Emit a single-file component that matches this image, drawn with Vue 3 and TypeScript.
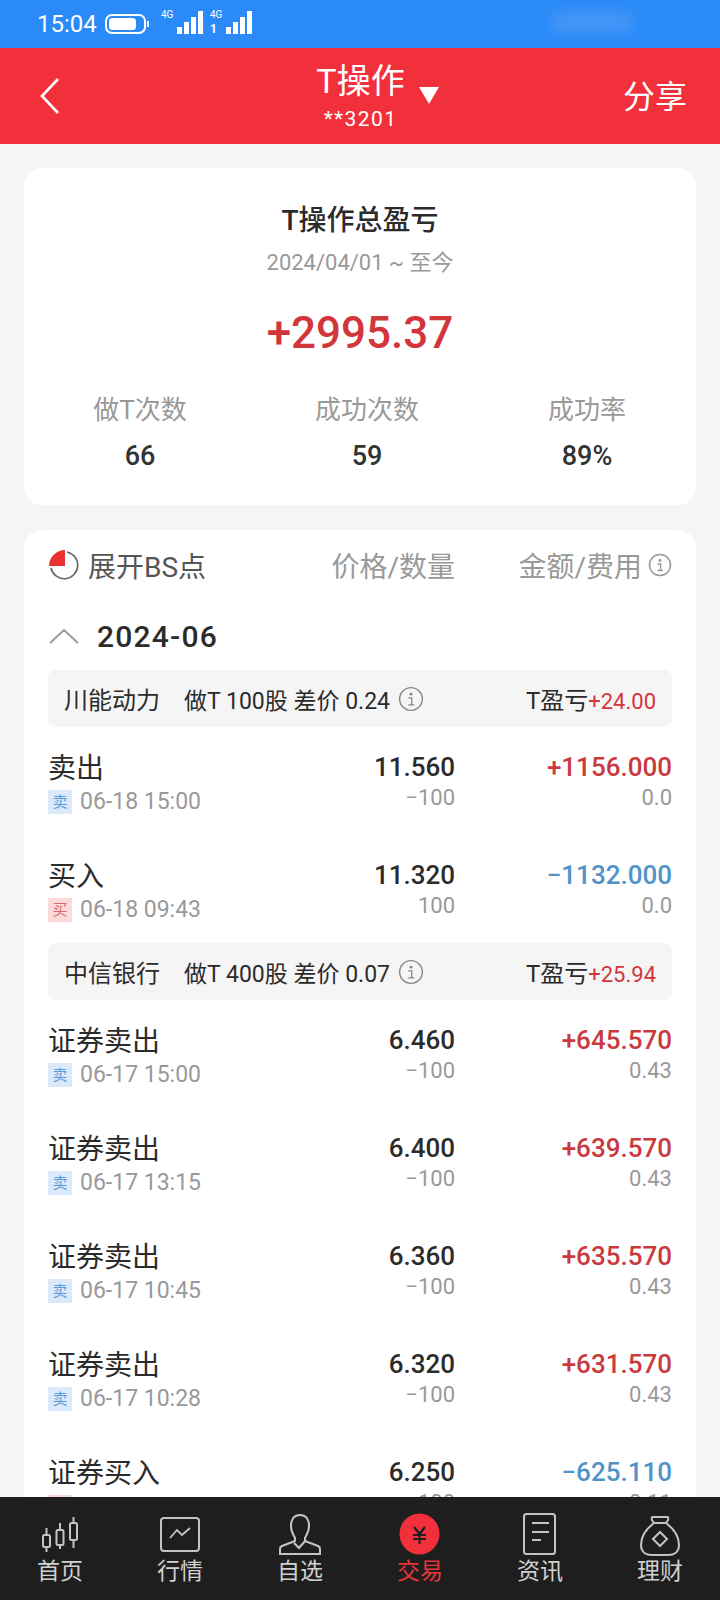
<script setup lang="ts">
interface Row {
  name: string
  side: 'buy' | 'sell'
  time: string
  price: string
  qty: string
  amount: string
  fee: string
}
interface Group {
  stock: string
  desc: string
  profit: string
  rows: Row[]
}

const sell = (name: string, time: string, price: string, amount: string, fee: string): Row => ({
  name, side: 'sell', time, price, qty: '−100', amount, fee
})
const buy = (name: string, time: string, price: string, amount: string, fee: string): Row => ({
  name, side: 'buy', time, price, qty: '100', amount, fee
})

const groups: Group[] = [
  {
    stock: '川能动力',
    desc: '做T 100股 差价 0.24',
    profit: '+24.00',
    rows: [
      sell('卖出', '06-18 15:00', '11.560', '+1156.000', '0.0'),
      buy('买入', '06-18 09:43', '11.320', '−1132.000', '0.0')
    ]
  },
  {
    stock: '中信银行',
    desc: '做T 400股 差价 0.07',
    profit: '+25.94',
    rows: [
      sell('证券卖出', '06-17 15:00', '6.460', '+645.570', '0.43'),
      sell('证券卖出', '06-17 13:15', '6.400', '+639.570', '0.43'),
      sell('证券卖出', '06-17 10:45', '6.360', '+635.570', '0.43'),
      sell('证券卖出', '06-17 10:28', '6.320', '+631.570', '0.43'),
      buy('证券买入', '06-17 09:35', '6.250', '−625.110', '0.11')
    ]
  }
]

const stats = [
  { label: '做T次数', value: '66' },
  { label: '成功次数', value: '59' },
  { label: '成功率', value: '89%' }
]

const tabs = [
  { key: 'home', label: '首页' },
  { key: 'market', label: '行情' },
  { key: 'watch', label: '自选' },
  { key: 'trade', label: '交易' },
  { key: 'news', label: '资讯' },
  { key: 'money', label: '理财' }
]
</script>

<template>
  <div class="page">
    <div class="status">
      <span class="clock">15:04</span>
      <svg class="battery" width="46" height="22" viewBox="0 0 46 22">
        <rect x="1" y="2" width="39" height="18" rx="6" fill="none" stroke="#fff" stroke-width="2" />
        <rect x="4" y="5" width="27" height="12" rx="3.5" fill="#fff" />
        <rect x="42" y="8" width="2" height="6" fill="#fff" />
      </svg>
      <svg class="signal" width="94" height="28" viewBox="0 0 94 28" fill="#fff">
        <text x="0" y="10" font-size="10" font-family="Roboto, sans-serif">4G</text>
        <rect x="16" y="19" width="5" height="7" />
        <rect x="23" y="14" width="5" height="12" />
        <rect x="30" y="9" width="5" height="17" />
        <rect x="37" y="3" width="5" height="23" />
        <text x="49" y="10" font-size="10" font-family="Roboto, sans-serif">4G</text>
        <text x="49" y="25" font-size="12" font-weight="700" font-family="Roboto, sans-serif">1</text>
        <rect x="65" y="19" width="5" height="7" />
        <rect x="72" y="14" width="5" height="12" />
        <rect x="79" y="9" width="5" height="17" />
        <rect x="86" y="3" width="5" height="23" />
      </svg>
      <span class="smudge"></span>
    </div>

    <header class="head">
      <svg class="back" width="24" height="38" viewBox="0 0 24 38">
        <path d="M20 2 L4 19 L20 36" fill="none" stroke="#fff" stroke-width="2.6" />
      </svg>
      <div class="title">
        <div class="title-main">T操作</div>
        <div class="title-sub">**3201</div>
        <span class="caret"></span>
      </div>
      <span class="share">分享</span>
    </header>

    <main class="body">
      <section class="card summary">
        <h2>T操作总盈亏</h2>
        <p class="range">2024/04/01 ~ 至今</p>
        <p class="total">+2995.37</p>
        <div class="stats">
          <div v-for="s in stats" :key="s.label" class="stat">
            <span class="stat-label">{{ s.label }}</span>
            <span class="stat-value">{{ s.value }}</span>
          </div>
        </div>
      </section>

      <section class="card list">
        <div class="list-head">
          <div class="expand">
            <svg width="32" height="32" viewBox="0 0 32 32">
              <path d="M19 3 A13.5 13.5 0 1 1 3 19" fill="none" stroke="#666" stroke-width="1.6" />
              <path d="M17 1 A16 16 0 0 0 1 17 H17 Z" fill="#e83232" />
            </svg>
            <span>展开BS点</span>
          </div>
          <span class="col-price">价格/数量</span>
          <span class="col-amount">
            金额/费用
            <svg class="info" width="24" height="24" viewBox="0 0 24 24">
              <circle cx="12" cy="12" r="10.5" fill="none" stroke="currentColor" stroke-width="1.5" />
              <circle cx="12" cy="7.5" r="1.4" fill="currentColor" />
              <path d="M9.5 11 H12.6 V17.5 M9.5 17.5 H15" fill="none" stroke="currentColor" stroke-width="1.4" />
            </svg>
          </span>
        </div>

        <div class="month">
          <svg width="32" height="18" viewBox="0 0 32 18">
            <path d="M2 16 L16 3 L30 16" fill="none" stroke="#999" stroke-width="2" />
          </svg>
          <span>2024-06</span>
        </div>

        <div v-for="g in groups" :key="g.stock" class="group">
          <div class="group-head">
            <span class="stock">{{ g.stock }}</span>
            <span class="desc">{{ g.desc }}</span>
            <svg class="info" width="26" height="26" viewBox="0 0 24 24">
              <circle cx="12" cy="12" r="10.5" fill="none" stroke="#888" stroke-width="1.3" />
              <circle cx="12" cy="7.5" r="1.3" fill="#888" />
              <path d="M9.5 11 H12.6 V17.5 M9.5 17.5 H15" fill="none" stroke="#888" stroke-width="1.2" />
            </svg>
            <span class="profit">T盈亏<em>{{ g.profit }}</em></span>
          </div>
          <div v-for="r in g.rows" :key="r.time" class="row">
            <div>
              <div class="name">{{ r.name }}</div>
              <div class="line-sub when">
                <span class="tag" :class="r.side">{{ r.side === 'buy' ? '买' : '卖' }}</span>
                <span>{{ r.time }}</span>
              </div>
            </div>
            <div class="num">
              <div class="line-main">{{ r.price }}</div>
              <div class="line-sub">{{ r.qty }}</div>
            </div>
            <div class="num">
              <div class="line-main" :class="r.side === 'buy' ? 'down' : 'up'">{{ r.amount }}</div>
              <div class="line-sub">{{ r.fee }}</div>
            </div>
          </div>
        </div>
      </section>
    </main>

    <nav class="tabs">
      <div v-for="t in tabs" :key="t.key" class="tab" :class="{ on: t.key === 'trade' }">
        <svg width="48" height="45" viewBox="0 0 48 45" fill="none" stroke="#c4c4c4" stroke-width="2">
          <template v-if="t.key === 'home'">
            <rect x="7" y="22" width="7" height="12" rx="1.5" />
            <path d="M10.5 15 V22 M10.5 34 V39" />
            <rect x="20.5" y="17" width="7" height="15" rx="1.5" />
            <path d="M24 10 V17 M24 32 V36" />
            <rect x="34" y="10" width="7" height="17" rx="1.5" />
            <path d="M37.5 4 V10 M37.5 27 V35" />
          </template>
          <template v-else-if="t.key === 'market'">
            <rect x="5" y="5" width="38" height="33" rx="3" />
            <path d="M14 25 L21 17 L26 22 L34 15" stroke-width="1.8" />
          </template>
          <template v-else-if="t.key === 'watch'">
            <path d="M24 2 C17 2 15 8 15 13 C15 19 18 23 19 25 V28 L6 33 Q4 34 4 36 V41 H44 V36 Q44 34 42 33 L29 28 V25 C30 23 33 19 33 13 C33 8 31 2 24 2 Z" />
            <path d="M18 30 L23 35 L30 27" stroke-width="2.2" />
          </template>
          <template v-else-if="t.key === 'trade'">
            <ellipse cx="23.5" cy="21" rx="20" ry="20.5" fill="#f2303c" stroke="none" />
            <path d="M18 14 L23.5 21 L29 14 M17 22 H30 M17 26 H30 M23.5 21 V31" stroke="#1e1e1e" stroke-width="2.2" />
          </template>
          <template v-else-if="t.key === 'news'">
            <rect x="8" y="1" width="31" height="40" rx="2.5" />
            <path d="M16 10 H33 M16 19 H33 M16 27 H25" />
          </template>
          <template v-else>
            <path d="M17 4 H31 Q33 4 32 7 L30 10 H18 L16 7 Q15 4 17 4 Z" />
            <path d="M18 10 C10 16 5 24 5 32 C5 39 10 42 16 42 H32 C38 42 43 39 43 32 C43 24 38 16 30 10" />
            <path d="M24 19 L31 26 L24 33 L17 26 Z" />
          </template>
        </svg>
        <span>{{ t.label }}</span>
      </div>
    </nav>
  </div>
</template>

<style scoped>
.page {
  width: 720px;
  height: 1600px;
  display: flex;
  flex-direction: column;
  overflow: hidden;
  background: #f5f5f5;
  font-family: Roboto, "Noto Sans CJK SC", sans-serif;
  color: #2b2b2b;
}
.status {
  flex: none;
  height: 48px;
  background: #2a8bf8;
  display: flex;
  align-items: center;
  padding-left: 37px;
  color: #fff;
  position: relative;
}
.clock { font-size: 24px; }
.battery { margin-left: 8px; }
.signal { margin-left: 10px; margin-top: -4px; }
.smudge {
  position: absolute;
  left: 550px;
  top: 12px;
  width: 84px;
  height: 20px;
  border-radius: 10px;
  background: rgba(170, 190, 235, 0.22);
  filter: blur(7px);
}
.head {
  flex: none;
  height: 96px;
  background: #f2303c;
  color: #fff;
  display: flex;
  align-items: center;
  justify-content: space-between;
  padding: 0 33px 0 38px;
}
.title {
  position: relative;
  text-align: center;
  margin-left: 36px;
}
.title-main { font-size: 34px; line-height: 40px; margin-top: -1px; }
.title-sub { font-size: 21px; line-height: 24px; margin-top: 6px; letter-spacing: 1.4px; }
.caret {
  position: absolute;
  left: 103px;
  top: 25px;
  border-left: 10px solid transparent;
  border-right: 10px solid transparent;
  border-top: 17px solid #fff;
}
.share { font-size: 32px; margin-top: -4px; }
.body {
  flex: 1;
  min-height: 0;
  overflow: hidden;
  padding: 24px 24px 0;
}
.card {
  background: #fff;
  border-radius: 18px;
}
.summary {
  height: 337px;
  text-align: center;
  padding-top: 35px;
  box-sizing: border-box;
  margin-bottom: 25px;
}
.summary h2 {
  margin: 0;
  font-size: 28px;
  font-weight: 500;
  line-height: 36px;
}
.range {
  margin: 9px 0 0;
  font-size: 22px;
  line-height: 30px;
  color: #999;
}
.total {
  margin: 25px 0 0;
  font-size: 44px;
  font-weight: 500;
  line-height: 60px;
  color: #d2353a;
}
.stats {
  display: grid;
  grid-template-columns: 232px 222px 218px;
  margin-top: 28px;
}
.stat { display: flex; flex-direction: column; align-items: center; }
.stat-label { font-size: 26px; line-height: 38px; color: #999; }
.stat-value { font-size: 27px; line-height: 36px; margin-top: 9px; font-weight: 500; color: #333; }
.list {
  padding: 0 24px;
  height: 1100px;
}
.list-head {
  height: 70px;
  display: flex;
  align-items: center;
}
.expand {
  display: flex;
  align-items: center;
  gap: 8px;
  width: 283px;
  font-size: 28px;
  color: #555;
}
.col-price {
  width: 124px;
  text-align: right;
  font-size: 28px;
  color: #999;
  white-space: nowrap;
}
.col-amount {
  flex: 1;
  display: flex;
  align-items: center;
  justify-content: flex-end;
  gap: 6px;
  font-size: 28px;
  color: #999;
}
.month {
  height: 54px;
  margin-top: 9px;
  display: flex;
  align-items: center;
  gap: 17px;
  font-size: 30px;
  font-weight: 500;
  letter-spacing: 1.2px;
}
.group-head {
  height: 57px;
  margin-top: 7px;
  padding: 0 16px;
  background: #f5f5f5;
  border-radius: 8px;
  display: flex;
  align-items: center;
  font-size: 24px;
}
.group + .group .group-head { margin-top: 0; }
.stock { width: 120px; }
.desc { font-size: 23px; margin-right: 8px; }
.profit { margin-left: auto; font-size: 24px; }
.profit em { font-style: normal; font-size: 22px; color: #d2353a; }
.row {
  height: 108px;
  box-sizing: border-box;
  padding-top: 18px;
  display: grid;
  grid-template-columns: 287px 120px 1fr;
  align-content: start;
}
.num { text-align: right; }
.line-main {
  font-size: 26px;
  font-weight: 500;
  line-height: 42px;
  margin-top: 1px;
}
.name {
  font-size: 28px;
  line-height: 42px;
  margin-top: 3px;
}
.line-sub {
  font-size: 22px;
  line-height: 30px;
  color: #999;
  margin-top: -5px;
}
.when {
  display: flex;
  align-items: center;
  font-size: 23px;
  margin-top: -3px;
}
.tag {
  width: 24px;
  height: 24px;
  margin-right: 8px;
  font-size: 15px;
  line-height: 24px;
  text-align: center;
}
.tag.sell { background: #dbeafa; color: #5b9ad8; }
.tag.buy { background: #fadada; color: #d96a6a; }
.up { color: #c93a3e; }
.down { color: #4f93c9; }
.tabs {
  flex: none;
  height: 103px;
  background: #1e1e1e;
  display: grid;
  grid-template-columns: repeat(6, 120px);
}
.tab {
  display: flex;
  flex-direction: column;
  align-items: center;
  padding-top: 16px;
  font-size: 23px;
  line-height: 28px;
  color: #d0d0d0;
}
.tab.on { color: #e8353c; }
</style>

<style>
html, body { margin: 0; background: #f5f5f5; }
</style>
